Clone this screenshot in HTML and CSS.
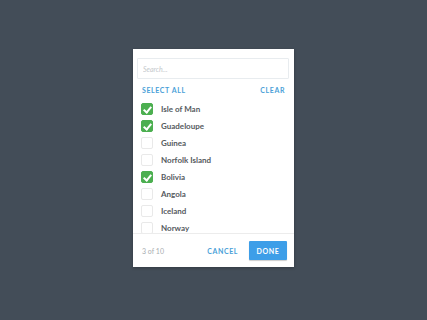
FILE: index.html
```html
<!DOCTYPE html>
<html lang="en">
<head>
    <meta charset="UTF-8">
    <title>Country Picker</title>
    <link rel="stylesheet" href="styles.css">
</head>
<body>
    <div class="picker">
        <div class="picker-search">
            <input type="text" placeholder="Search...">
        </div>

        <div class="picker-actions">
            <a href="#">Select all</a>
            <a href="#">Clear</a>
        </div>

        <!-- Country list -->
        <ul class="picker-list">
            <li class="checked"><span class="box"></span>Isle of Man</li>
            <li class="checked"><span class="box"></span>Guadeloupe</li>
            <li><span class="box"></span>Guinea</li>
            <li><span class="box"></span>Norfolk Island</li>
            <li class="checked"><span class="box"></span>Bolivia</li>
            <li><span class="box"></span>Angola</li>
            <li><span class="box"></span>Iceland</li>
            <li><span class="box"></span>Norway</li>
        </ul>

        <div class="picker-footer">
            <span class="count">3 of 10</span>
            <button class="cancel-btn">Cancel</button>
            <button class="done-btn">Done</button>
        </div>
    </div>
</body>
</html>
```

FILE: styles.css
```css
:root {
    --bg-color: #434d58;
    --blue: #4a9fd8;
    --green: #4caf50;
    --text-color: #555a5e;
    --line-color: #ececec;
}

* {
    margin: 0;
    padding: 0;
    box-sizing: border-box;
}

body {
    font-family: 'Lato', 'Open Sans', sans-serif;
    background-color: var(--bg-color);
    width: 427px;
    height: 320px;
    display: flex;
    justify-content: center;
    align-items: flex-start;
    padding-top: 49px;
}

.picker {
    width: 161px;
    height: 218px;
    background: white;
    box-shadow: 0 1px 3px rgba(0,0,0,0.25);
    display: flex;
    flex-direction: column;
}

/* Search */
.picker-search {
    padding: 9px 5px 0 4px;
}

.picker-search input {
    display: block;
    width: 100%;
    height: 21px;
    border: 1px solid #e8ecef;
    border-radius: 1px;
    padding: 0 5px;
    font-family: inherit;
    font-size: 7px;
    font-style: italic;
    outline: none;
}

.picker-search input::placeholder {
    color: #c4c8cc;
}

.picker-actions {
    display: flex;
    justify-content: space-between;
    align-items: center;
    height: 12px;
    margin-top: 5px;
    padding: 0 9px 0 9px;
}

.picker-actions a {
    color: var(--blue);
    text-decoration: none;
    text-transform: uppercase;
    font-size: 7px;
    font-weight: 700;
    letter-spacing: 0.6px;
}

/* List */
.picker-list {
    list-style: none;
    height: 137px;
    overflow: hidden;
    padding: 4px 0 0 8px;
}

.picker-list li {
    display: flex;
    align-items: center;
    gap: 8px;
    height: 17px;
    font-size: 8px;
    font-weight: 700;
    color: var(--text-color);
}

.box {
    width: 12px;
    height: 12px;
    border: 1px solid #e9e9e9;
    border-radius: 2px;
    flex-shrink: 0;
    position: relative;
}

.checked .box {
    background: var(--green);
    border-color: var(--green);
}

.checked .box::after {
    content: '';
    position: absolute;
    left: 3px;
    top: 1px;
    width: 3px;
    height: 6px;
    border: solid white;
    border-width: 0 2px 2px 0;
    transform: rotate(40deg);
}

/* Footer */
.picker-footer {
    flex: 1;
    display: flex;
    align-items: center;
    border-top: 1px solid var(--line-color);
    padding: 0 7px 0 9px;
}

.count {
    font-size: 7px;
    color: #a9adb1;
    flex: 1;
}

.picker-footer button {
    border: none;
    font-family: inherit;
    font-size: 7px;
    font-weight: 700;
    text-transform: uppercase;
    letter-spacing: 0.6px;
    cursor: pointer;
}

.cancel-btn {
    background: none;
    color: var(--blue);
    margin-right: 11px;
}

.done-btn {
    background: #3d9ee8;
    color: white;
    width: 38px;
    height: 19px;
    border-radius: 1px;
    box-shadow: 0 1px 1px rgba(0,0,0,0.2);
}
```
